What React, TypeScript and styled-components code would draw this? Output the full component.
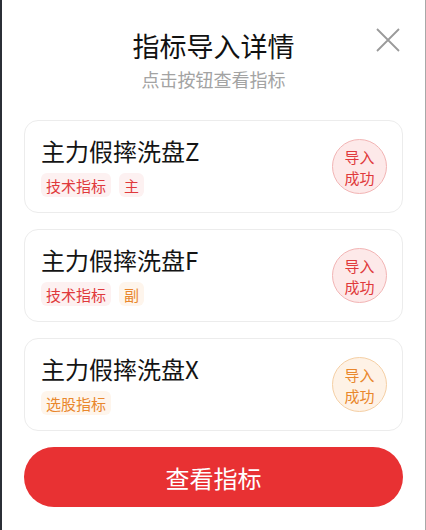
import styled, { createGlobalStyle } from 'styled-components';

const GlobalStyle = createGlobalStyle`
  html, body {
    margin: 0;
    padding: 0;
    background: #ffffff;
  }
  body {
    font-family: "Noto Sans CJK SC", "Noto Sans", sans-serif;
    color: #1a1a1a;
  }
`;

const Sheet = styled.div`
  box-sizing: border-box;
  width: 426px;
  height: 530px;
  background: #ffffff;
  border-left: 2px solid #2b2f36;
  border-right: 1px solid #a8a8a8;
  padding: 27px 22px 0 22px;
  display: flex;
  flex-direction: column;
`;

const Header = styled.header`
  position: relative;
  display: flex;
  flex-direction: column;
  align-items: center;
  gap: 2px;
`;

const Title = styled.h2`
  margin: 0;
  font-size: 27px;
  line-height: 38px;
  font-weight: 400;
  color: #111;
`;

const Subtitle = styled.p`
  margin: 0;
  font-size: 18px;
  line-height: 24px;
  color: #a3a3a3;
`;

const CloseButton = styled.button`
  position: absolute;
  top: 0;
  right: 2px;
  width: 26px;
  height: 26px;
  padding: 0;
  border: none;
  background: none;
  cursor: pointer;
`;

const List = styled.div`
  margin-top: 29px;
  display: flex;
  flex-direction: column;
  gap: 16px;
`;

const Card = styled.div`
  box-sizing: border-box;
  height: 93px;
  border: 1px solid #ececec;
  border-radius: 14px;
  padding: 0 15px 0 16px;
  display: flex;
  align-items: center;
  justify-content: space-between;
`;

const Info = styled.div`
  display: flex;
  flex-direction: column;
  gap: 7px;
  margin-top: 0;
`;

const Name = styled.div`
  font-size: 24px;
  line-height: 30px;
  color: #141414;
`;

const Tags = styled.div`
  display: flex;
  gap: 8px;
`;

type Tone = 'red' | 'orange';

const tone = {
  red: { text: '#e0393c', bg: '#fdf1f1', badgeBg: '#fde9e9', border: '#f2b4b4' },
  orange: { text: '#e9872c', bg: '#fef5ec', badgeBg: '#fef2e6', border: '#f5cfa4' },
};

const Tag = styled.span<{ $tone: Tone }>`
  height: 24px;
  padding: 0 5px;
  border-radius: 6px;
  display: flex;
  align-items: center;
  font-size: 15px;
  color: ${(p) => tone[p.$tone].text};
  background: ${(p) => tone[p.$tone].bg};
`;

const Badge = styled.div<{ $tone: Tone }>`
  box-sizing: border-box;
  width: 55px;
  height: 55px;
  border-radius: 50%;
  border: 1px solid ${(p) => tone[p.$tone].border};
  background: ${(p) => tone[p.$tone].badgeBg};
  color: ${(p) => tone[p.$tone].text};
  font-size: 15px;
  line-height: 21px;
  display: flex;
  flex-direction: column;
  align-items: center;
  justify-content: center;
  text-align: center;
`;

const ViewButton = styled.button`
  margin-top: 16px;
  height: 60px;
  border: none;
  border-radius: 30px;
  background: #e83133;
  color: #fff;
  font-family: inherit;
  font-size: 24px;
  cursor: pointer;
`;

const items: { name: string; tags: { label: string; tone: Tone }[]; badge: Tone }[] = [
  {
    name: '主力假摔洗盘Z',
    tags: [
      { label: '技术指标', tone: 'red' },
      { label: '主', tone: 'red' },
    ],
    badge: 'red',
  },
  {
    name: '主力假摔洗盘F',
    tags: [
      { label: '技术指标', tone: 'red' },
      { label: '副', tone: 'orange' },
    ],
    badge: 'red',
  },
  {
    name: '主力假摔洗盘X',
    tags: [{ label: '选股指标', tone: 'orange' }],
    badge: 'orange',
  },
];

export default function App() {
  return (
    <>
      <GlobalStyle />
      <Sheet>
        <Header>
          <Title>指标导入详情</Title>
          <Subtitle>点击按钮查看指标</Subtitle>
          <CloseButton aria-label="关闭">
            <svg width="26" height="26" viewBox="0 0 26 26">
              <path d="M2 2 L24 24 M24 2 L2 24" stroke="#9a9a9a" strokeWidth="1.8" />
            </svg>
          </CloseButton>
        </Header>
        <List>
          {items.map((item) => (
            <Card key={item.name}>
              <Info>
                <Name>{item.name}</Name>
                <Tags>
                  {item.tags.map((t) => (
                    <Tag key={t.label} $tone={t.tone}>
                      {t.label}
                    </Tag>
                  ))}
                </Tags>
              </Info>
              <Badge $tone={item.badge}>
                <span>导入</span>
                <span>成功</span>
              </Badge>
            </Card>
          ))}
        </List>
        <ViewButton>查看指标</ViewButton>
      </Sheet>
    </>
  );
}
